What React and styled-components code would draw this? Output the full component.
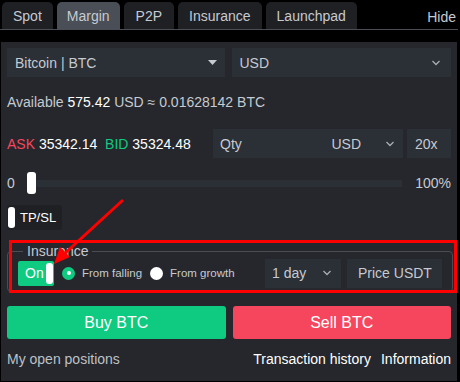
import React from "react";
import styled, { createGlobalStyle } from "styled-components";

const Global = createGlobalStyle`
  html, body { margin: 0; padding: 0; background: #000; }
  body { font-family: "Liberation Sans", Arial, sans-serif; }
  * { box-sizing: border-box; }
`;

const Page = styled.div`
  position: relative;
  width: 460px;
  height: 382px;
  background: #000;
  overflow: hidden;
`;

const TabBar = styled.div`
  display: flex;
  align-items: flex-end;
  height: 30px;
  padding: 2px 2px 0 2px;
  border-bottom: 1px solid #4a4d54;
  margin-right: 2px;
`;

const Tab = styled.div`
  height: 27px;
  padding: 0 ${(p) => p.$pad || 11}px;
  margin-right: 4px;
  display: flex;
  align-items: center;
  font-size: 14px;
  color: #c6cad1;
  background: ${(p) => (p.$active ? "#4a4e56" : "#1f2024")};
  border-radius: 5px 5px 0 0;
`;

const Hide = styled.div`
  margin-left: auto;
  align-self: center;
  font-size: 14px;
  color: #c6cad1;
  padding-top: 2px;
`;

const Panel = styled.div`
  margin: 12px 3px 0 1px;
  height: 339px;
  background: #25272c;
  padding: 6px 6px 0 6px;
`;

const Row = styled.div`
  display: flex;
  align-items: center;
  gap: ${(p) => p.$gap || 0}px;
  margin-top: ${(p) => p.$mt || 0}px;
`;

const Select = styled.div`
  flex: ${(p) => p.$flex || 1};
  height: 29px;
  background: #2b2f36;
  display: flex;
  align-items: center;
  padding: 0 ${(p) => p.$pr || 10}px 0 ${(p) => p.$pl || 8}px;
  font-size: 14px;
  color: #c6cad1;
  gap: 8px;
`;

const Grow = styled.span`
  flex: 1;
`;

const Info = styled.div`
  font-size: 14px;
  color: #c6cad1;
`;

const White = styled.span`
  color: #fff;
`;

const Colored = styled.span`
  color: ${(p) => p.$c};
`;

const Slider = styled.div`
  flex: 1;
  display: flex;
  align-items: center;
  margin: 0 13px 0 12px;
`;

const Thumb = styled.div`
  width: 9px;
  height: 22px;
  background: #fff;
  border-radius: 3px;
`;

const Track = styled.div`
  flex: 1;
  height: 7px;
  background: #2b2f36;
`;

const TpSl = styled.div`
  display: inline-flex;
  align-items: center;
  gap: 5px;
  height: 25px;
  width: 55px;
  padding-left: 1px;
  background: #1f2024;
  border-radius: 3px;
  font-size: 13px;
  color: #fff;
`;

const Knob = styled.div`
  width: 7px;
  height: 21px;
  background: #fff;
  border-radius: 3px;
`;

const Fieldset = styled.fieldset`
  margin: 13px 0 0 0;
  padding: 0 10px 4px 10px;
  border: 1px solid #4a4d54;
  border-radius: 4px;
  height: 49px;
  display: flex;
  align-items: center;
  gap: 6px;
  width: 446px;
`;

const Legend = styled.legend`
  font-size: 14px;
  color: #c6cad1;
  padding: 0 4px;
  margin-left: 5px;
`;

const Toggle = styled.div`
  display: flex;
  align-items: center;
  justify-content: space-between;
  width: 36px;
  height: 25px;
  background: #0ecb81;
  border-radius: 2px;
  padding: 0 1px 0 7px;
  font-size: 14px;
  color: #fff;
`;

const Radio = styled.div`
  width: 13px;
  height: 13px;
  border-radius: 50%;
  background: ${(p) => (p.$on ? "#0ecb81" : "#fff")};
  display: flex;
  align-items: center;
  justify-content: center;
  margin-left: 2px;
  &::after {
    content: "";
    width: 4px;
    height: 4px;
    border-radius: 50%;
    background: ${(p) => (p.$on ? "#fff" : "transparent")};
  }
`;

const Small = styled.span`
  font-size: 11.5px;
  color: #c6cad1;
  margin-left: 1px;
`;

const Btn = styled.div`
  flex: 1;
  height: 33px;
  border-radius: 3px;
  background: ${(p) => p.$bg};
  display: flex;
  align-items: center;
  justify-content: center;
  font-size: 16px;
  color: #fff;
`;

const Link = styled.span`
  font-size: 14px;
  color: ${(p) => (p.$dim ? "#bdc1c8" : "#fff")};
  margin-left: ${(p) => p.$ml || 0}px;
`;

const Annotation = styled.div`
  position: absolute;
  left: 9px;
  top: 240px;
  width: 448px;
  height: 53px;
  border: 3px solid #ff0000;
  pointer-events: none;
`;

const Arrow = styled.svg`
  position: absolute;
  left: 0;
  top: 0;
  pointer-events: none;
`;

const Chevron = () => (
  <svg width="10" height="6" viewBox="0 0 10 6">
    <path d="M1.5 1 L5 4.5 L8.5 1" fill="none" stroke="#a8adb5" strokeWidth="1.3" />
  </svg>
);

const Caret = () => (
  <svg width="9" height="5" viewBox="0 0 9 5">
    <path d="M0 0 L9 0 L4.5 5 Z" fill="#c6cad1" />
  </svg>
);

export default function App() {
  return (
    <Page>
      <Global />
      <TabBar>
        <Tab $pad={11}>Spot</Tab>
        <Tab $active $pad={10}>Margin</Tab>
        <Tab $pad={12}>P2P</Tab>
        <Tab $pad={11}>Insurance</Tab>
        <Tab $pad={11}>Launchpad</Tab>
        <Hide>Hide</Hide>
      </TabBar>
      <Panel>
        <Row $gap={7}>
          <Select $pl={8} $pr={8}>
            <Grow>Bitcoin | BTC</Grow>
            <Caret />
          </Select>
          <Select>
            <Grow>USD</Grow>
            <Chevron />
          </Select>
        </Row>
        <Row $mt={17}>
          <Info>
            Available <White>575.42</White> USD ≈ 0.01628142 BTC
          </Info>
        </Row>
        <Row $mt={19}>
          <Info style={{ width: 207 }}>
            <Colored $c="#f6465d">ASK</Colored> <White>35342.14</White>{" "}
            <Colored $c="#0ecb81">&nbsp;BID</Colored> <White>35324.48</White>
          </Info>
          <Select $flex="0 0 190px" $pl={7} $pr={8}>
            <Grow>Qty</Grow>
            <span>USD</span>
            <span style={{ width: 8 }} />
            <Chevron />
          </Select>
          <Select $flex="0 0 44px" $pl={8} style={{ marginLeft: 4 }}>
            20x
          </Select>
        </Row>
        <Row $mt={14}>
          <Info>0</Info>
          <Slider>
            <Thumb />
            <Track />
          </Slider>
          <Info>100%</Info>
        </Row>
        <Row $mt={11}>
          <TpSl>
            <Knob />
            TP/SL
          </TpSl>
        </Row>
        <Fieldset>
          <Legend>Insurance</Legend>
          <Toggle>
            On
            <Knob />
          </Toggle>
          <Radio $on />
          <Small>From falling</Small>
          <Radio />
          <Small>From growth</Small>
          <Grow />
          <Select $flex="0 0 76px" $pl={7} $pr={9}>
            <Grow>1 day</Grow>
            <Chevron />
          </Select>
          <Select $flex="0 0 95px" $pl={11}>
            Price USDT
          </Select>
        </Fieldset>
        <Row $gap={7} $mt={14}>
          <Btn $bg="#0ecb81">Buy BTC</Btn>
          <Btn $bg="#f6465d">Sell BTC</Btn>
        </Row>
        <Row $mt={12}>
          <Link $dim>My open positions</Link>
          <Grow />
          <Link>Transaction history</Link>
          <Link $ml={10}>Information</Link>
        </Row>
      </Panel>
      <Annotation />
      <Arrow width="460" height="382">
        <line x1="123" y1="200" x2="62" y2="256" stroke="#ff0000" strokeWidth="3" />
        <path d="M54 264 L60 247 L70 257 Z" fill="#ff0000" />
      </Arrow>
    </Page>
  );
}
